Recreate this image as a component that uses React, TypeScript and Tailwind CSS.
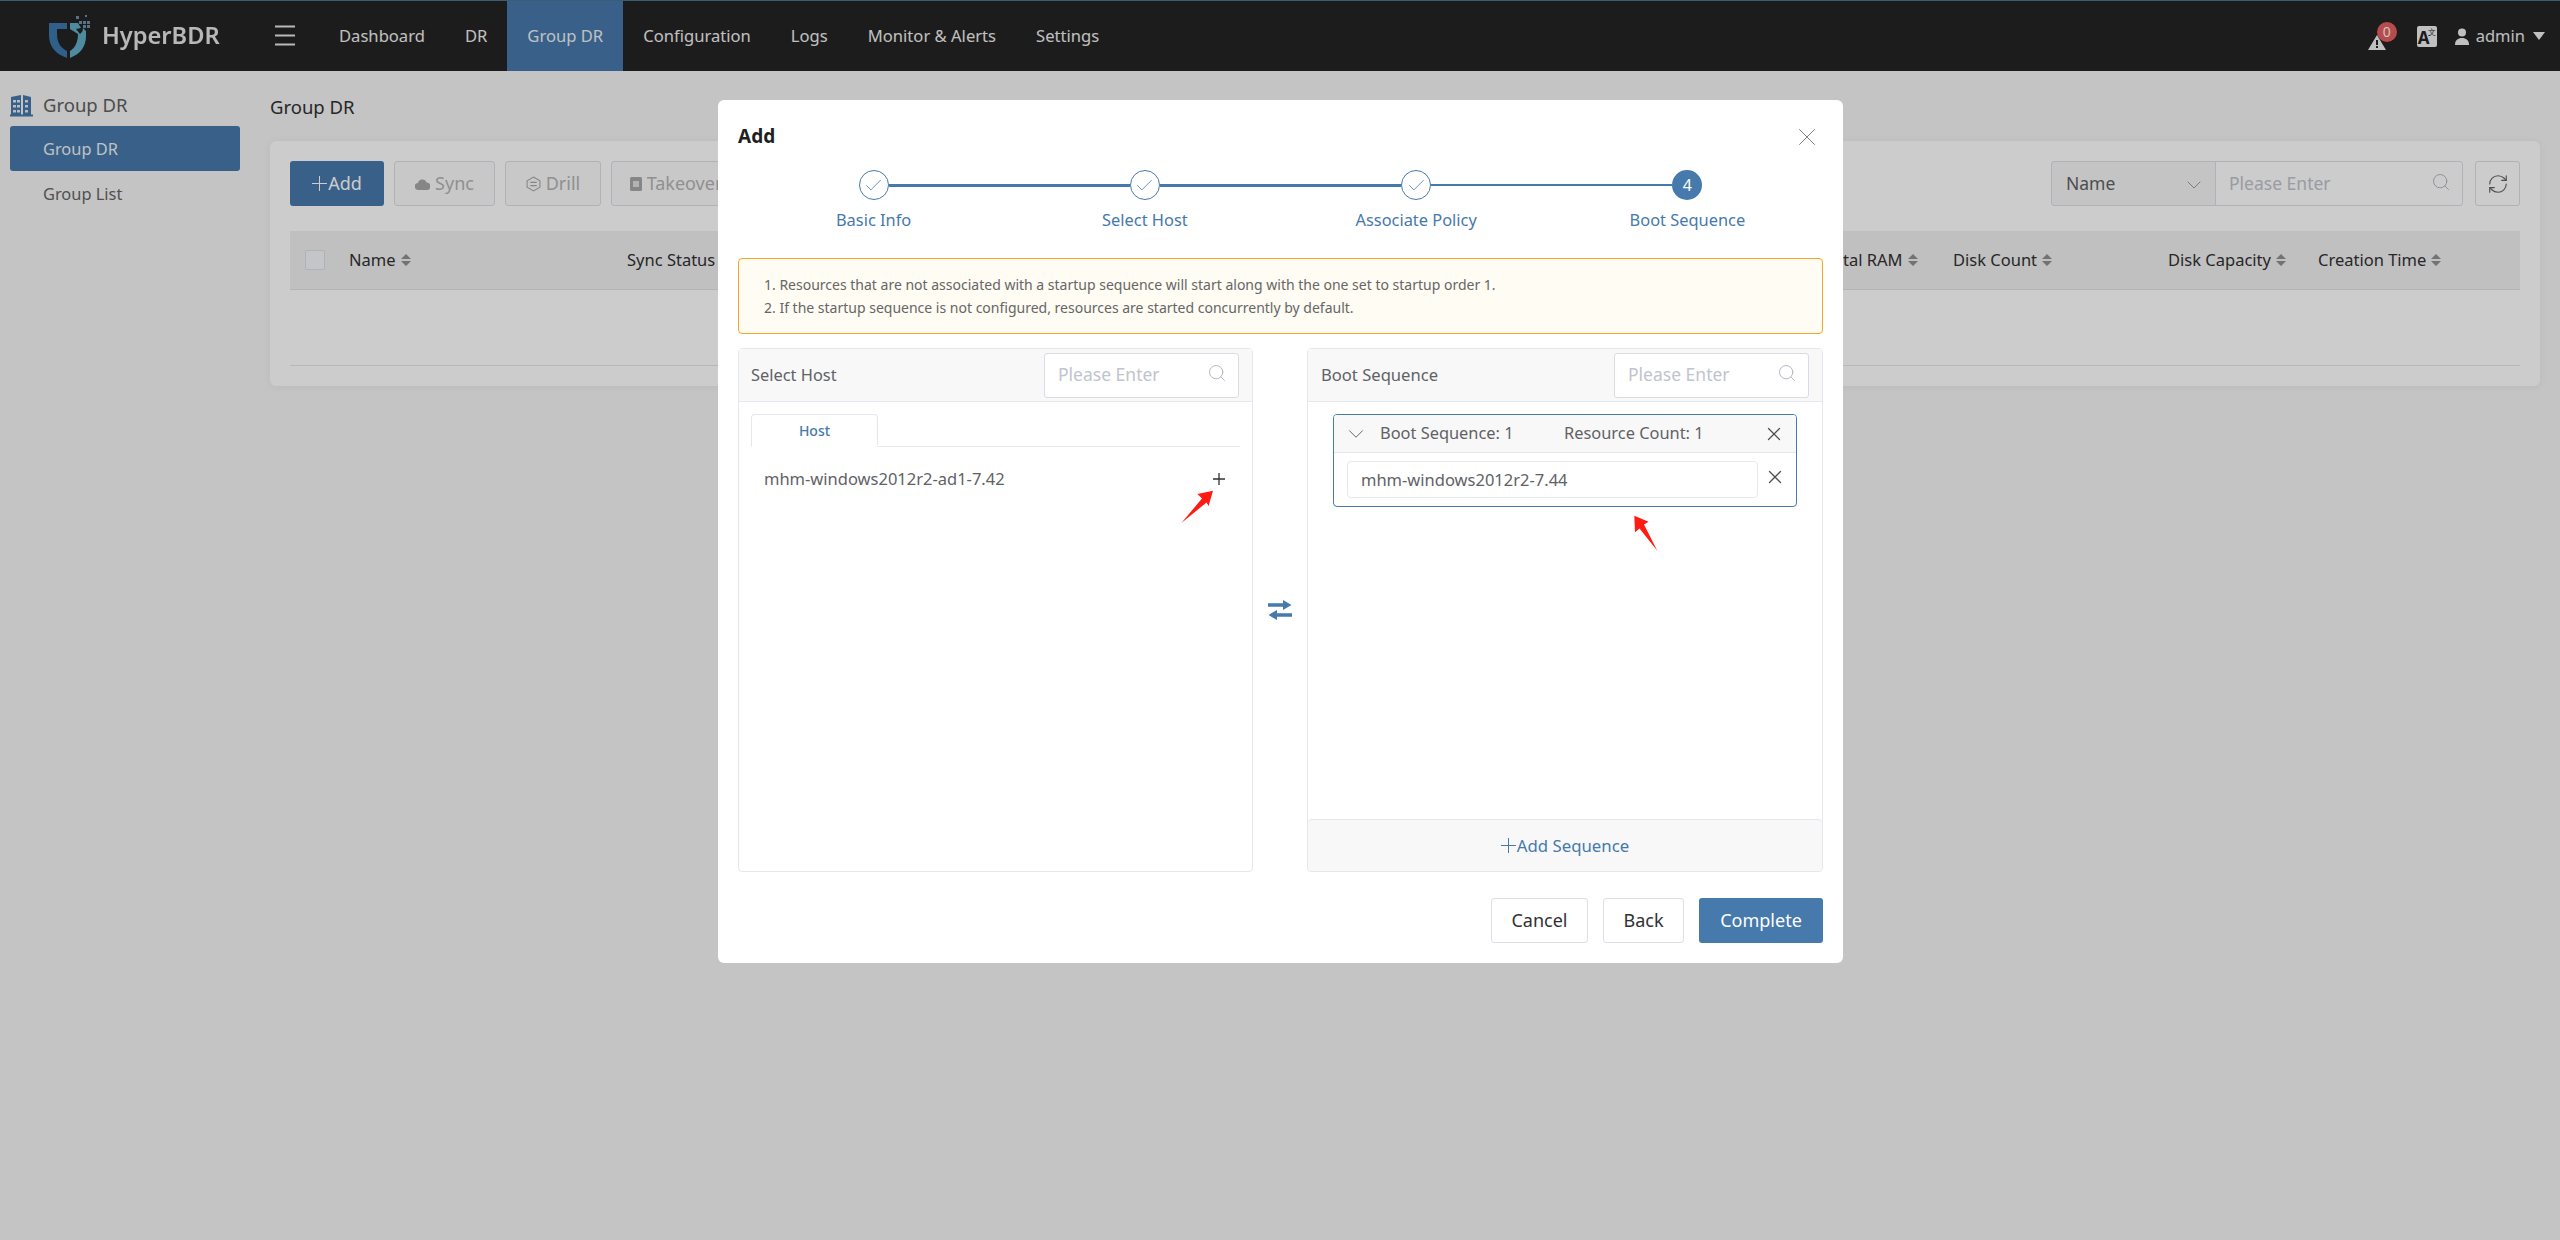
import React from "react";
import { Check, ChevronDown, RefreshCw, Search, X } from "lucide-react";

const Sort = () => (
  <svg width="10" height="12" viewBox="0 0 10 12" className="ml-[5px] shrink-0">
    <path d="M5 0 10 5H0Z M0 7H10L5 12Z" fill="#909090" />
  </svg>
);

const PlusMark = ({ size, color, w = 1 }: { size: number; color: string; w?: number }) => (
  <svg width={size} height={size} viewBox={`0 0 ${size} ${size}`} className="shrink-0">
    <path d={`M0 ${size / 2}H${size}M${size / 2} 0V${size}`} stroke={color} strokeWidth={w} fill="none" />
  </svg>
);

const Th = ({ children }: { children: React.ReactNode }) => (
  <div className="flex items-center text-[16.5px] text-[#303133] whitespace-nowrap">
    {children}
    <Sort />
  </div>
);

const Logo = () => (
  <svg width="42" height="44" viewBox="0 0 42 44" className="shrink-0">
    <path d="M0 9 18 9 18 15 8 15 8 20C8 29 12 34 18 37L18 44C7 40 0 33 0 21Z" fill="#3d78ad" />
    <path d="M21 9H29L32 14 27 15 31 20C33 18 34 17 34 14L37 17V22C37 33 31 40 21 44V37C26 34 29 28 29 20L21 15Z" fill="#62aec6" />
    <g fill="#6f8fa8">
      <rect x="30" y="7" width="3" height="3" /><rect x="34" y="7" width="3" height="3" />
      <rect x="34" y="11" width="3" height="3" /><rect x="38" y="7" width="3" height="3" />
      <rect x="38" y="11" width="3" height="3" /><rect x="27" y="2" width="3" height="3" />
      <rect x="36" y="1" width="2" height="2" />
    </g>
  </svg>
);

const PanelSearch = () => (
  <div className="flex h-[45px] w-[195px] items-center justify-between rounded-[3px] border border-[#d9dce2] bg-white pl-[13px] pr-[11px]">
    <span className="-mt-[1px] text-[17.5px] text-[#c0c4cc]">Please Enter</span>
    <Search size={20} strokeWidth={1.2} color="#b4b8c0" className="-mt-[5px]" />
  </div>
);

const Step = ({ n, label, left, right, done }: { n: string; label: string; left: string; right: string; done: boolean }) => (
  <div className="flex flex-1 flex-col items-center">
    <div className="flex w-full items-center">
      <div className={`flex-1 ${left}`} />
      {done ? (
        <div className="flex h-[30px] w-[30px] items-center justify-center rounded-full border border-[#4679ac] bg-white">
          <Check size={21} strokeWidth={0.9} color="#4679ac" />
        </div>
      ) : (
        <div className="flex h-[30px] w-[30px] items-center justify-center rounded-full bg-[#4679ac] text-[16px] text-white">{n}</div>
      )}
      <div className={`flex-1 ${right}`} />
    </div>
    <div className="mt-2 text-[16.4px] leading-6 text-[#4679ac]">{label}</div>
  </div>
);

const ToolBtn = ({ w, icon, label }: { w: string; icon: React.ReactNode; label: string }) => (
  <div className={`flex h-[45px] ${w} shrink-0 items-center justify-center gap-[5px] rounded-[3px] border border-[#dcdfe6] bg-[#fafafa] text-[18px] text-[#b4b4b4]`}>
    {icon}
    {label}
  </div>
);

export default function App() {
  return (
    <div className="relative h-[1240px] w-[2560px] overflow-hidden bg-[#f5f5f5] font-['Noto_Sans','Open_Sans',sans-serif]">
      {/* top bar */}
      <header className="flex h-[71px] items-stretch border-t border-[#4a7590] bg-[#242424]">
        <div className="flex w-[275px] items-center pl-[49px]">
          <Logo />
          <span className="ml-[11px] text-[23.6px] font-semibold leading-none text-[#e6e6e6] blur-[0.5px]">HyperBDR</span>
        </div>
        <div className="flex w-[44px] items-center">
          <svg width="20" height="22" viewBox="0 0 20 22"><path d="M0 1.5H20M0 10.5H20M0 19.5H20" stroke="#e8e8e8" strokeWidth="2" /></svg>
        </div>
        <nav className="flex text-[16.6px] text-[#f0f0f0]">
          {["Dashboard", "DR", "Group DR", "Configuration", "Logs", "Monitor & Alerts", "Settings"].map((t) => (
            <div key={t} className={`flex items-center px-[20px] ${t === "Group DR" ? "bg-[#4679ac] text-[#eef2f6]" : ""}`}>{t}</div>
          ))}
        </nav>
        <div className="ml-auto flex items-center pr-[15px] text-[16.5px] text-[#eeeeee]">
          <div className="relative mr-[31px] mt-[13px] h-[15px] w-[18px]">
            <svg width="18" height="15" viewBox="0 0 18 15" className="block"><path d="M9 0 18 15H0Z" fill="#f0f0f0" /><path d="M8 5h2v5H8zM8 11h2v2H8z" fill="#242424" /></svg>
            <div className="absolute -top-[13px] left-[9px] flex h-[20px] w-[20px] items-center justify-center rounded-full bg-[#e66060] text-[14px] leading-none text-[#f5f5f5]">0</div>
          </div>
          <div className="relative mr-[18px] flex h-[21px] w-[20px] items-center justify-center rounded-[2px] bg-[#f0f0f0] text-[17px] font-bold leading-none text-[#242424]">
            <span className="-ml-[6px] mt-[3px]">A</span>
            <span className="absolute right-[1px] top-[2px] text-[8px] font-normal leading-none">文</span>
          </div>
          <svg width="14" height="17" viewBox="0 0 14 17" className="mr-[7px]"><circle cx="7" cy="4.5" r="4" fill="#f0f0f0" /><path d="M0 17C0 12 3 10 7 10s7 2 7 7Z" fill="#f0f0f0" /></svg>
          <span>admin</span>
          <svg width="12" height="8" viewBox="0 0 12 8" className="ml-[8px]"><path d="M0 0H12L6 8Z" fill="#f0f0f0" /></svg>
        </div>
      </header>

      <div className="flex">
        {/* sidebar */}
        <aside className="w-[270px] shrink-0 pl-[10px] pt-[21px]">
          <div className="flex h-[26px] items-center">
            <svg width="23" height="23" viewBox="0 0 23 23" className="shrink-0">
              <path d="M1 22V3l10-2v21zM13 22V1l8 2v19z" fill="#4679ac" />
              <path d="M0 21.5h23" stroke="#4679ac" strokeWidth="2" />
              <g fill="#e8ecf0"><rect x="3" y="6" width="3" height="2.5" /><rect x="7" y="6" width="3" height="2.5" /><rect x="3" y="11" width="3" height="2.5" /><rect x="7" y="11" width="3" height="2.5" /><rect x="3" y="16" width="3" height="2.5" /><rect x="7" y="16" width="3" height="2.5" /><rect x="15" y="6" width="3" height="2.5" /><rect x="15" y="11" width="3" height="2.5" /><rect x="15" y="16" width="3" height="2.5" /></g>
            </svg>
            <span className="ml-[10px] text-[18.5px] text-[#5f5f5f]">Group DR</span>
          </div>
          <div className="mt-[8px] flex h-[45px] w-[230px] items-center rounded-[3px] bg-[#4679ac] pl-[33px] pt-[2px] text-[16.4px] text-[#eef2f6]">Group DR</div>
          <div className="flex h-[45px] items-center pl-[33px] pt-[2px] text-[16.4px] text-[#666666]">Group List</div>
        </aside>

        {/* main */}
        <main className="w-[2290px] shrink-0 pr-[20px]">
          <div className="flex h-[70px] items-center pt-[1px] text-[18.5px] text-[#303133]">Group DR</div>
          <section className="h-[245px] rounded-[6px] bg-white px-[20px] pt-[20px] shadow-[0_1px_8px_rgba(0,0,0,0.05)]">
            <div className="flex">
              <div className="flex gap-[10px]">
                <div className="flex h-[45px] w-[94px] items-center justify-center gap-[1px] rounded-[3px] bg-[#4679ac] text-[18px] text-white">
                  <PlusMark size={15} color="#ffffff" />Add
                </div>
                <ToolBtn w="w-[101px]" label="Sync" icon={<svg width="15" height="12" viewBox="0 0 15 12"><path d="M3.5 12a3.5 3.5 0 0 1-.5-7 4.5 4.5 0 0 1 8.6-.6A3.8 3.8 0 0 1 11.5 12Z" fill="#a8a8a8" /></svg>} />
                <ToolBtn w="w-[96px]" label="Drill" icon={<svg width="15" height="16" viewBox="0 0 14 15" fill="none" stroke="#a8a8a8"><path d="M7 1 13 4.5v6L7 14 1 10.5v-6Z" /><path d="M4 6h6M10 9H4" /></svg>} />
                <ToolBtn w="w-[130px]" label="Takeover" icon={<svg width="12" height="14" viewBox="0 0 12 14"><rect width="12" height="14" rx="1.5" fill="#a8a8a8" /><rect x="3" y="4" width="6" height="6" fill="#e0e0e0" /></svg>} />
              </div>
              <div className="ml-auto flex">
                <div className="flex h-[45px] w-[165px] items-center justify-between rounded-l-[3px] border border-[#dcdfe6] bg-[#f5f5f5] pl-[14px] pr-[9px] text-[17.5px] text-[#606266]">
                  Name
                  <ChevronDown size={24} strokeWidth={0.9} color="#909399" className="mt-[3px]" />
                </div>
                <div className="-ml-px flex h-[45px] w-[248px] items-center justify-between rounded-r-[3px] border border-[#dcdfe6] bg-white pl-[13px] pr-[11px] text-[17.5px] text-[#c0c4cc]">
                  Please Enter
                  <Search size={20} strokeWidth={1.2} color="#b4b8c0" className="-mt-[4px]" />
                </div>
                <div className="ml-[12px] flex h-[45px] w-[45px] items-center justify-center rounded-[3px] border border-[#dcdfe6] bg-white">
                  <RefreshCw size={22} strokeWidth={1.2} color="#606266" />
                </div>
              </div>
            </div>
            <div className="mt-[25px] grid h-[59px] grid-cols-[59px_278px_1198px_128px_215px_150px_1fr] items-center border-b border-[#dfe2e8] bg-[#f0f0f0]">
              <div className="pl-[15px]"><div className="h-[20px] w-[20px] rounded-[2px] border border-[#dcdfe6] bg-[#f5f7fa]" /></div>
              <Th>Name</Th>
              <Th>Sync Status</Th>
              <Th>Total RAM</Th>
              <Th>Disk Count</Th>
              <Th>Disk Capacity</Th>
              <Th>Creation Time</Th>
            </div>
            <div className="h-[76px] border-b border-[#e4e7ed]" />
          </section>
        </main>
      </div>

      {/* dimming layer */}
      <div className="absolute inset-0 bg-black/20" />

      {/* dialog */}
      <div className="absolute left-[718px] top-[100px] flex w-[1125px] flex-col rounded-[6px] bg-white px-[20px] pb-[20px] pt-[24px]">
        <div className="flex h-[24px] items-center justify-between">
          <span className="text-[19px] font-bold text-[#1f1f1f]">Add</span>
          <X size={30} strokeWidth={0.8} color="#808080" className="mr-[1px] mt-[2px]" />
        </div>

        <div className="mt-[22px] flex">
          <Step n="1" label="Basic Info" left="" right="h-[3px] bg-[#4679ac]" done />
          <Step n="2" label="Select Host" left="h-[3px] bg-[#4679ac]" right="h-[3px] bg-[#4679ac]" done />
          <Step n="3" label="Associate Policy" left="h-[3px] bg-[#4679ac]" right="h-[2px] bg-[#4679ac]" done />
          <Step n="4" label="Boot Sequence" left="h-[2px] bg-[#4679ac]" right="" done={false} />
        </div>

        <div className="mt-[26px] flex h-[76px] flex-col justify-center rounded-[4px] border border-[#f5a623] bg-[#fffcf3] pl-[25px] text-[14px] leading-[23px] text-[#666666]">
          <div>1. Resources that are not associated with a startup sequence will start along with the one set to startup order 1.</div>
          <div>2. If the startup sequence is not configured, resources are started concurrently by default.</div>
        </div>

        <div className="mt-[14px] flex h-[524px]">
          {/* left panel */}
          <div className="flex w-[515px] flex-col rounded-[4px] border border-[#e4e7ed]">
            <div className="flex h-[53px] shrink-0 items-center justify-between border-b border-[#e4e7ed] bg-[#f8f8f8] pl-[12px] pr-[13px]">
              <span className="text-[16.4px] text-[#606266]">Select Host</span>
              <PanelSearch />
            </div>
            <div className="px-[12px] pt-[12px]">
              <div className="flex h-[33px] border-b border-[#e4e7ed]">
                <div className="-mb-px flex w-[127px] items-center justify-center rounded-t-[4px] border border-b-white border-[#e4e7ed] bg-white text-[14px] font-medium text-[#4679ac]">Host</div>
              </div>
              <div className="mt-[12px] flex h-[40px] items-center justify-between pl-[13px] pr-[15px]">
                <span className="text-[16.5px] text-[#606266]">mhm-windows2012r2-ad1-7.42</span>
                <PlusMark size={12} color="#303133" w={1.3} />
              </div>
            </div>
          </div>

          <div className="flex w-[54px] items-center justify-center">
            <svg width="24" height="20" viewBox="0 0 24 20">
              <path d="M0 3.2H15V0L23.5 5 15 10V6.8H0Z" fill="#4679ac" />
              <path d="M24 13.2H9V10L.5 15 9 20V16.8H24Z" fill="#4679ac" />
            </svg>
          </div>

          {/* right panel */}
          <div className="flex w-[516px] flex-col rounded-[4px] border border-[#e4e7ed]">
            <div className="flex h-[53px] shrink-0 items-center justify-between border-b border-[#e4e7ed] bg-[#f8f8f8] pl-[13px] pr-[13px]">
              <span className="text-[16.6px] text-[#606266]">Boot Sequence</span>
              <PanelSearch />
            </div>
            <div className="flex-1 pl-[25px] pt-[12px]">
              <div className="h-[93px] w-[464px] overflow-hidden rounded-[4px] border border-[#4679ac]">
                <div className="flex h-[38px] items-center border-b border-[#e4e7ed] bg-[#f8f8f8] text-[16.4px] text-[#606266]">
                  <ChevronDown size={26} strokeWidth={0.9} color="#606266" className="ml-[9px]" />
                  <span className="ml-[11px] w-[184px]">Boot Sequence: 1</span>
                  <span>Resource Count: 1</span>
                  <X size={22} strokeWidth={1.4} color="#505050" className="ml-auto mr-[11px]" />
                </div>
                <div className="flex items-center pl-[13px] pt-[8px]">
                  <div className="flex h-[37px] w-[411px] items-center rounded-[4px] border border-[#e8e8e8] pl-[13px] pt-[2px] text-[16.5px] text-[#606266]">mhm-windows2012r2-7.44</div>
                  <X size={22} strokeWidth={1.4} color="#505050" className="-mt-[5px] ml-[6px]" />
                </div>
              </div>
            </div>
            <div className="flex h-[52px] shrink-0 items-center justify-center gap-[1px] rounded-[4px] border-t border-[#e4e7ed] bg-[#f8f8f8] text-[16.8px] text-[#4679ac]">
              <PlusMark size={15} color="#4679ac" />Add Sequence
            </div>
          </div>
        </div>

        <div className="mt-[26px] flex justify-end text-[18px]">
          <div className="flex h-[45px] w-[97px] items-center justify-center rounded-[3px] border border-[#dcdfe6] text-[#303133]">Cancel</div>
          <div className="ml-[15px] flex h-[45px] w-[81px] items-center justify-center rounded-[3px] border border-[#dcdfe6] text-[#303133]">Back</div>
          <div className="ml-[15px] flex h-[45px] w-[124px] items-center justify-center rounded-[3px] bg-[#4679ac] text-white">Complete</div>
        </div>
      </div>

      {/* red annotation arrows */}
      <svg className="absolute left-[1170px] top-[480px]" width="60" height="50" viewBox="1170 480 60 50">
        <path d="M1181.4 523 1202 498.5 1197.5 494 1213 490.7 1208.6 506 1206.500 502.500Z" fill="#ff1a12" />
      </svg>
      <svg className="absolute left-[1625px] top-[510px]" width="40" height="45" viewBox="1625 510 40 45">
        <path d="M1634.3 515.7 1648.6 521.7 1644 524.500 1657.3 550.7 1639.500 528.500 1635 532.3Z" fill="#ff1a12" />
      </svg>
    </div>
  );
}
